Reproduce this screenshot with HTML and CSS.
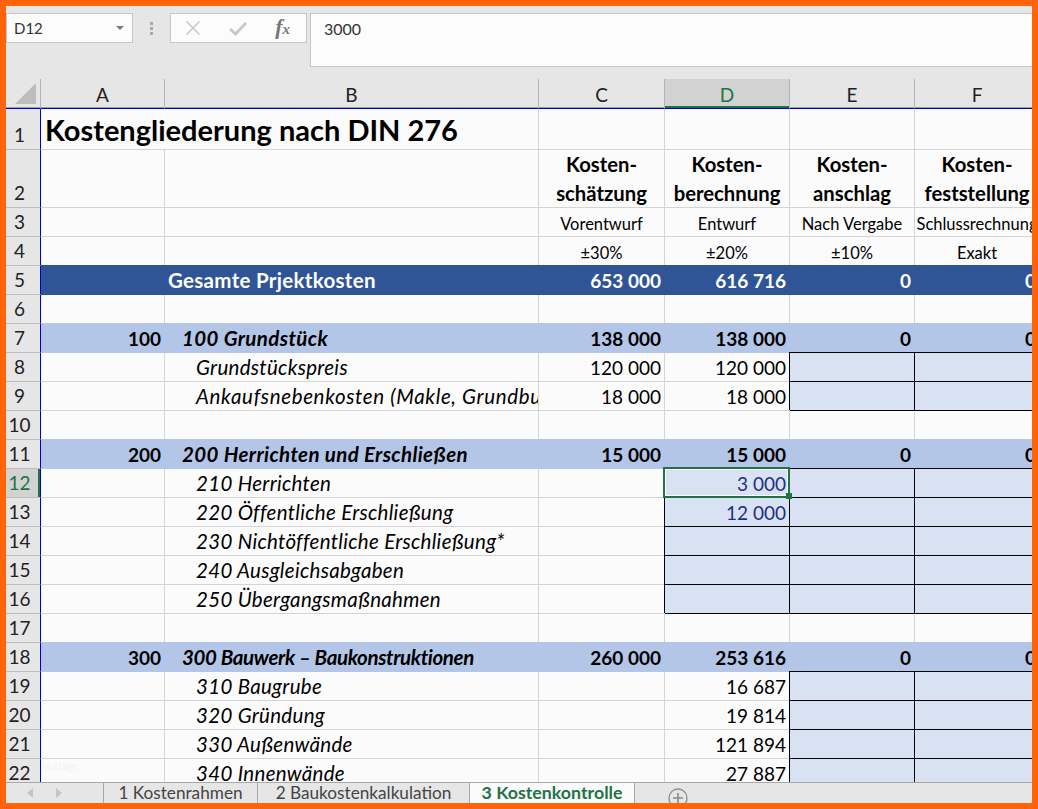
FILE: index.html
```html
<!DOCTYPE html>
<html lang="de">
<head>
    <meta charset="UTF-8">
    <title>Kostenkontrolle</title>
    <link rel="stylesheet" href="styles.css">
</head>
<body>
    <div class="window">
        <div class="formula-bar">
            <div class="name-box">
                <span>D12</span>
                <svg class="caret" width="8" height="4" viewBox="0 0 8 4"><path d="M0 0h8L4 4z" fill="#7a7a7a"/></svg>
            </div>
            <div class="grip"><i></i><i></i><i></i></div>
            <div class="fx-buttons">
                <svg width="16" height="16" viewBox="0 0 16 16"><path d="M1.500 1.500l13 13M14.500 1.500l-13 13" stroke="#c8c8c8" stroke-width="1.600" fill="none"/></svg>
                <svg width="18" height="15" viewBox="0 0 18 15"><path d="M1 8l5.500 5L17 2" stroke="#c8c8c8" stroke-width="3" fill="none"/></svg>
                <span class="fx">f<small>x</small></span>
            </div>
            <div class="formula-input">3000</div>
        </div>

        <div class="sheet">
            <table>
                <colgroup>
                    <col class="c-head"><col class="c-a"><col class="c-b"><col class="c-c"><col class="c-num"><col class="c-num"><col class="c-num">
                </colgroup>
                <thead>
                    <tr>
                        <th class="corner"><svg width="21" height="21" viewBox="0 0 21 21"><path d="M21 0v21H0z" fill="#bdbdbd"/></svg></th>
                        <th>A</th><th>B</th><th>C</th><th class="active">D</th><th>E</th><th>F</th>
                    </tr>
                </thead>
                <tbody>
                    <tr class="r1"><th>1</th><td colspan="2" class="title">Kostengliederung nach DIN 276</td><td></td><td></td><td></td><td></td></tr>
                    <tr class="r2"><th>2</th><td></td><td></td>
                        <td class="phase">Kosten-<br>schätzung</td><td class="phase">Kosten-<br>berechnung</td><td class="phase">Kosten-<br>anschlag</td><td class="phase">Kosten-<br>feststellung</td></tr>
                    <tr class="small"><th>3</th><td></td><td></td><td>Vorentwurf</td><td>Entwurf</td><td>Nach Vergabe</td><td class="tight">Schlussrechnung</td></tr>
                    <tr class="small"><th>4</th><td></td><td></td><td>±30%</td><td>±20%</td><td>±10%</td><td>Exakt</td></tr>
                    <tr class="total"><th>5</th><td></td><td class="name">Gesamte Prjektkosten</td><td class="n">653 000</td><td class="n">616 716</td><td class="n">0</td><td class="n">0</td></tr>
                    <tr><th>6</th><td></td><td></td><td></td><td></td><td></td><td></td></tr>
                    <tr class="group"><th>7</th><td class="n">100</td><td class="label">100 Grundstück</td><td class="n">138 000</td><td class="n">138 000</td><td class="n">0</td><td class="n">0</td></tr>
                    <tr><th>8</th><td></td><td class="item">Grundstückspreis</td><td class="n">120 000</td><td class="n">120 000</td><td class="inp"></td><td class="inp"></td></tr>
                    <tr><th>9</th><td></td><td class="item wide">Ankaufsnebenkosten (Makle, Grundbuch)</td><td class="n">18 000</td><td class="n">18 000</td><td class="inp"></td><td class="inp"></td></tr>
                    <tr><th>10</th><td></td><td></td><td></td><td></td><td></td><td></td></tr>
                    <tr class="group"><th>11</th><td class="n">200</td><td class="label">200 Herrichten und Erschließen</td><td class="n">15 000</td><td class="n">15 000</td><td class="n">0</td><td class="n">0</td></tr>
                    <tr><th class="active">12</th><td></td><td class="item">210 Herrichten</td><td></td><td class="n inp val selected">3 000<span class="fill-handle"></span></td><td class="inp"></td><td class="inp"></td></tr>
                    <tr><th>13</th><td></td><td class="item">220 Öffentliche Erschließung</td><td></td><td class="n inp val">12 000</td><td class="inp"></td><td class="inp"></td></tr>
                    <tr><th>14</th><td></td><td class="item">230 Nichtöffentliche Erschließung*</td><td></td><td class="inp"></td><td class="inp"></td><td class="inp"></td></tr>
                    <tr><th>15</th><td></td><td class="item">240 Ausgleichsabgaben</td><td></td><td class="inp"></td><td class="inp"></td><td class="inp"></td></tr>
                    <tr><th>16</th><td></td><td class="item">250 Übergangsmaßnahmen</td><td></td><td class="inp"></td><td class="inp"></td><td class="inp"></td></tr>
                    <tr><th>17</th><td></td><td></td><td></td><td></td><td></td><td></td></tr>
                    <tr class="group"><th>18</th><td class="n">300</td><td class="label narrow">300 Bauwerk – Baukonstruktionen</td><td class="n">260 000</td><td class="n">253 616</td><td class="n">0</td><td class="n">0</td></tr>
                    <tr><th>19</th><td></td><td class="item">310 Baugrube</td><td></td><td class="n">16 687</td><td class="inp"></td><td class="inp"></td></tr>
                    <tr><th>20</th><td></td><td class="item">320 Gründung</td><td></td><td class="n">19 814</td><td class="inp"></td><td class="inp"></td></tr>
                    <tr><th>21</th><td></td><td class="item">330 Außenwände</td><td></td><td class="n">121 894</td><td class="inp"></td><td class="inp"></td></tr>
                    <tr><th>22</th><td class="watermark">Vorlage</td><td class="item">340 Innenwände</td><td></td><td class="n">27 887</td><td class="inp"></td><td class="inp"></td></tr>
                </tbody>
            </table>
        </div>

        <div class="tabs">
            <div class="tab-nav">
                <svg width="6" height="10" viewBox="0 0 6 10"><path d="M6 0v10L0 5z" fill="#c4c4c4"/></svg>
                <svg width="6" height="10" viewBox="0 0 6 10"><path d="M0 0v10l6-5z" fill="#c4c4c4"/></svg>
            </div>
            <div class="tab tab-first">1 Kostenrahmen</div>
            <div class="tab tab-second">2 Baukostenkalkulation</div>
            <div class="tab current">3 Kostenkontrolle</div>
            <svg class="add-sheet" width="20" height="20" viewBox="0 0 20 20"><circle cx="10" cy="10" r="9" fill="none" stroke="#8a8a8a" stroke-width="1.300"/><path d="M10 5v10M5 10h10" stroke="#8a8a8a" stroke-width="1.600"/></svg>
        </div>
    </div>
</body>
</html>
```

FILE: styles.css
```css
* {
    box-sizing: border-box;
}

html, body {
    margin: 0;
    height: 100%;
}

body {
    font-family: 'Lato', 'Liberation Sans', sans-serif;
    color: #000;
    overflow: hidden;
}

.window {
    width: 1038px;
    height: 809px;
    border: 6px solid #ff6508;
    background: #e6e6e6;
    display: flex;
    flex-direction: column;
    overflow: hidden;
}

/* formula bar */
.formula-bar {
    flex: none;
    height: 73px;
    padding-top: 7px;
    display: flex;
    align-items: flex-start;
}

.name-box {
    width: 127px;
    height: 30px;
    padding: 0 7px;
    background: #fcfcfc;
    border: 1px solid #c6c6c6;
    display: flex;
    align-items: center;
    justify-content: space-between;
    font-size: 15px;
    color: #333;
}

.caret {
    margin-right: 1px;
}

.grip {
    width: 37px;
    height: 30px;
    display: flex;
    flex-direction: column;
    align-items: center;
    justify-content: center;
    gap: 2px;
}

.grip i {
    width: 3px;
    height: 3px;
    background: #a8a8a8;
}

.fx-buttons {
    width: 137px;
    height: 30px;
    padding: 0 16px 0 14px;
    background: #fcfcfc;
    border: 1px solid #c6c6c6;
    display: flex;
    align-items: center;
    justify-content: space-between;
}

.fx {
    font-family: 'Liberation Serif', serif;
    font-style: italic;
    font-weight: bold;
    font-size: 22px;
    line-height: 24px;
    color: #777;
}

.fx small {
    font-size: 15px;
}

.formula-input {
    flex: 1;
    height: 54px;
    margin-left: 3px;
    margin-right: -2px;
    padding: 5px 13px;
    background: #fcfcfc;
    border: 1px solid #c6c6c6;
    font-size: 16px;
    color: #333;
}

/* sheet */
.sheet {
    flex: 1;
    min-height: 0;
    overflow: hidden;
    background: #fbfbfb;
}

table {
    border-collapse: separate;
    border-spacing: 0;
    table-layout: fixed;
    width: 1034px;
    font-size: 19px;
}

.c-head { width: 35px; }
.c-a { width: 124px; }
.c-b { width: 374px; }
.c-c { width: 126px; }
.c-num { width: 125px; }

tr {
    height: 29px;
}

th {
    padding: 0;
    font-weight: normal;
    background: #e6e6e6;
    color: #222;
    text-align: center;
}

thead th {
    height: 30px;
    border-right: 1px solid #b4b4b4;
    border-bottom: 1px solid #0000c8;
    box-shadow: inset 0 -1px 0 #a0a0a0;
    vertical-align: bottom;
    padding-bottom: 2px;
}

thead th.corner {
    text-align: right;
    padding: 0 4px 4px 0;
    line-height: 0;
}

thead th.active {
    background: #d2d2d2;
    color: #217346;
    box-shadow: inset 0 -2px 0 #217346;
}

tbody th {
    padding-right: 7px;
    border-right: 1px solid #0000c8;
    border-bottom: 1px solid #bdbdbd;
    vertical-align: bottom;
    line-height: 28px;
}

tbody th.active {
    background: #d2d2d2;
    color: #217346;
    box-shadow: inset -2px 0 0 #217346;
}

td {
    padding: 0 3px;
    border-right: 1px solid #d4d4d4;
    border-bottom: 1px solid #d4d4d4;
    overflow: hidden;
    white-space: nowrap;
    background: #fbfbfb;
}

tr.r1 {
    height: 41px;
}

tr.r2 {
    height: 58px;
}

.title {
    font-size: 29px;
    font-weight: bold;
    padding-left: 4px;
}

.phase {
    text-align: center;
    font-size: 20.3px;
    font-weight: bold;
    line-height: 28.5px;
    padding: 0;
}

.small td {
    text-align: center;
    font-size: 16.5px;
    padding-top: 3px;
}

.small td.tight {
    padding: 3px 0 0;
}

.n {
    text-align: right;
}

.total td {
    background: #2f5597;
    border-color: #2f5597;
    box-shadow: 0 -1px 0 #2f5597;
    color: #fff;
    font-weight: bold;
}

.total .name {
    font-size: 20.5px;
    letter-spacing: 0.3px;
}

.group td {
    background: #b4c6e7;
    border-color: #b4c6e7;
    box-shadow: 0 -1px 0 #b4c6e7;
    font-weight: bold;
}

.group .label {
    font-size: 20.5px;
    font-style: italic;
    letter-spacing: 0.37px;
    padding-left: 17px;
}

.group .narrow {
    letter-spacing: -0.37px;
}

.item {
    font-size: 20.5px;
    font-style: italic;
    letter-spacing: 0.3px;
    padding-left: 31px;
}

.item.wide {
    letter-spacing: 0.65px;
}

.inp {
    background: #d9e2f3;
    border-right: 1px solid #000;
    border-bottom: 1px solid #000;
    box-shadow: -1px -1px 0 #000;
}

.val {
    color: #1f2f80;
}

.selected {
    position: relative;
    overflow: visible;
}

.selected::after {
    content: "";
    position: absolute;
    inset: -2px -1px -1px -2px;
    border: 2px solid #217346;
    box-shadow: inset 0 0 0 1px #fff;
}

.fill-handle {
    position: absolute;
    right: -3px;
    bottom: -2px;
    width: 6px;
    height: 6px;
    background: #217346;
    z-index: 1;
}

.watermark {
    font-size: 11px;
    line-height: 11px;
    color: #f3f3f3;
    vertical-align: top;
    padding: 1px 0 0 1px;
}

/* sheet tabs */
.tabs {
    flex: none;
    height: 21px;
    display: flex;
    align-items: stretch;
    background: #e6e6e6;
    border-top: 1px solid #a8a8a8;
    font-size: 17.2px;
    color: #444;
    overflow: hidden;
}

.tab-nav {
    width: 97px;
    display: flex;
    align-items: center;
    gap: 23px;
    padding-left: 21px;
}

.tab {
    border-left: 1px solid #a8a8a8;
    line-height: 20px;
    text-align: center;
    white-space: nowrap;
}

.tab-first {
    width: 154px;
}

.tab-second {
    width: 212px;
}

.tab.current {
    width: 166px;
    background: #fbfbfb;
    margin-top: -1px;
    line-height: 21px;
    color: #217346;
    font-size: 17.8px;
    font-weight: bold;
    border-right: 1px solid #a8a8a8;
}

.add-sheet {
    flex: none;
    margin: 5px 0 0 33px;
}
```
